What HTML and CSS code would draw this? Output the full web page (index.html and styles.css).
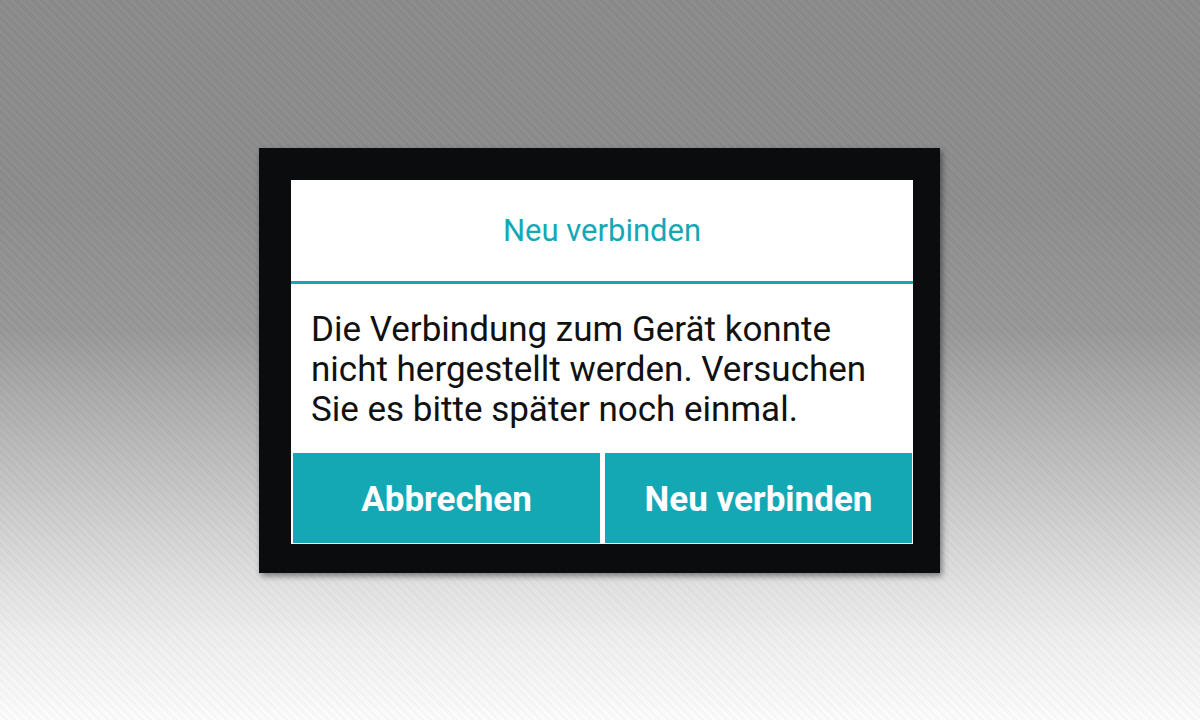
FILE: index.html
```html
<!DOCTYPE html>
<html lang="de">
<head>
<meta charset="utf-8">
<title>Neu verbinden</title>
<link rel="stylesheet" href="styles.css">
</head>
<body>
<div class="stage">
  <div class="frame">
    <div class="dialog">
      <div class="dialog-title">Neu verbinden</div>
      <div class="dialog-body">Die Verbindung zum Gerät konnte nicht hergestellt werden. Versuchen Sie es bitte später noch einmal.</div>
      <div class="dialog-buttons">
        <div class="btn">Abbrechen</div>
        <div class="btn">Neu verbinden</div>
      </div>
    </div>
  </div>
</div>
</body>
</html>
```

FILE: styles.css
```css
html, body {
  margin: 0;
  padding: 0;
}
body {
  width: 1200px;
  height: 720px;
  overflow: hidden;
  font-family: Roboto, "Liberation Sans", sans-serif;
  background:
    repeating-linear-gradient(45deg, rgba(255,255,255,0.018) 0 3px, rgba(0,0,0,0.018) 3px 6px),
    linear-gradient(to bottom, #8b8b8b 0px, #8d8d8d 200px, #989898 330px, #bbbbbb 450px, #dadada 560px, #efefef 640px, #fcfcfc 720px);
}
.stage {
  width: 1200px;
  height: 720px;
  display: flex;
  align-items: center;
  justify-content: center;
}
.frame {
  width: 622px;
  background: #0b0c0e;
  padding: 32px 27px 29px 32px;
  box-shadow: 2px 3px 6px rgba(0,0,0,0.45);
  margin-left: -1px;
}
.dialog {
  background: #ffffff;
  display: flex;
  flex-direction: column;
}
.dialog-title {
  height: 101px;
  display: flex;
  align-items: center;
  justify-content: center;
  color: #14a8b5;
  font-size: 31px;
  border-bottom: 3px solid #14a8b5;
}
.dialog-body {
  height: 169px;
  box-sizing: border-box;
  padding: 26px 16px 0 20px;
  font-size: 35px;
  line-height: 40px;
  color: #111111;
}
.dialog-buttons {
  display: flex;
  gap: 5px;
  padding: 0 1px 1px 2px;
}
.btn {
  flex: 1;
  height: 90px;
  box-sizing: border-box;
  padding-top: 3px;
  background: #14a8b5;
  color: #ffffff;
  font-weight: 700;
  font-size: 35px;
  display: flex;
  align-items: center;
  justify-content: center;
}
```
